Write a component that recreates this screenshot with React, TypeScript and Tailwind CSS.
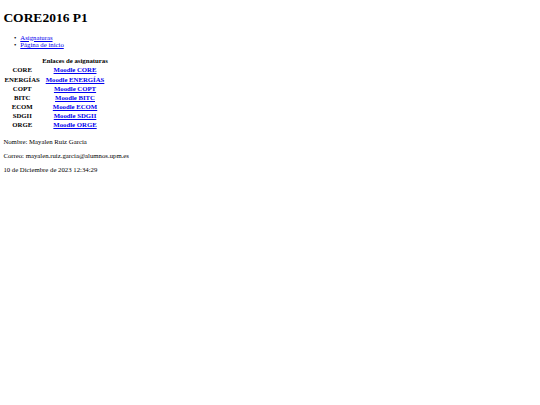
export default function App() {
  const rows: [string, string][] = [
    ["CORE", "Moodle CORE"],
    ["ENERGÍAS", "Moodle ENERGÍAS"],
    ["COPT", "Moodle COPT"],
    ["BITC", "Moodle BITC"],
    ["ECOM", "Moodle ECOM"],
    ["SDGII", "Moodle SDGII"],
    ["ORGE", "Moodle ORGE"],
  ];
  const links = ["Asignaturas", "Página de inicio"];
  return (
    <div className="bg-white min-h-[405px] px-[3.375px] pt-[9.5px] text-black text-[6.75px] leading-[normal]" style={{ fontFamily: '"Liberation Serif", "Times New Roman", serif' }}>
      <h1 className="text-[13.5px] font-bold mb-[8px] leading-[normal]">CORE2016 P1</h1>
      <ul className="pl-[10.5px] my-0">
        {links.map((l) => (
          <li key={l} className="flex items-baseline h-[7.5px] leading-[7.5px]">
            <span className="w-[6.4px] text-black">•</span>
            <a href="#" className="text-[#0000EE] underline">{l}</a>
          </li>
        ))}
      </ul>
      <table className="border-separate border-spacing-0 mt-[7.8px]">
        <tbody>
          <tr>
            <th className="px-[1.2px] py-[0.8px] leading-[8px]"></th>
            <th className="px-[1.2px] py-[0.8px] leading-[8px] font-bold">Enlaces de asignaturas</th>
          </tr>
          {rows.map(([a, b]) => (
            <tr key={a}>
              <th className="px-[1.2px] py-[0.55px] leading-[8px] font-bold text-center">{a}</th>
              <td className="px-[1.2px] py-[0.55px] leading-[8px] text-center font-bold">
                <a href="#" className="text-[#0000EE] underline">{b}</a>
              </td>
            </tr>
          ))}
        </tbody>
      </table>
      <p className="mt-[8.4px] mb-[6.9px]">Nombre: Mayalen Ruiz García</p>
      <p className="my-[6.9px]">Correo: mayalen.ruiz.garcia@alumnos.upm.es</p>
      <p className="mt-[6.9px]">10 de Diciembre de 2023 12:34:29</p>
    </div>
  );
}
